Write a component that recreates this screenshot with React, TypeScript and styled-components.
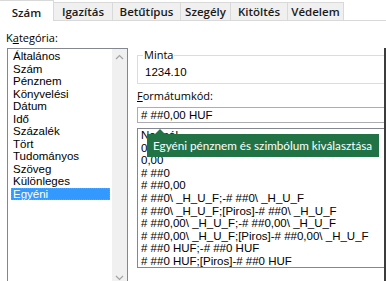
import styled, { createGlobalStyle } from "styled-components";

const GlobalStyle = createGlobalStyle`
  html, body {
    margin: 0;
    padding: 0;
    background: #ffffff;
    overflow: hidden;
  }
  body {
    width: 386px;
    height: 281px;
    font-family: "Noto Sans", "Open Sans", sans-serif;
    color: #000;
  }
`;

const Dialog = styled.div`
  width: 386px;
  height: 281px;
  display: flex;
  flex-direction: column;
  background: #fff;
  overflow: hidden;
`;

const TabStrip = styled.div`
  display: flex;
  align-items: flex-end;
  height: 21px;
  border-bottom: 1px solid #d9d9d9;
  box-sizing: border-box;
`;

const Tab = styled.div<{ $active?: boolean; $w: number }>`
  width: ${p => p.$w}px;
  height: ${p => (p.$active ? 21 : 18)}px;
  box-sizing: border-box;
  display: flex;
  align-items: center;
  justify-content: center;
  font-family: "Open Sans", sans-serif;
  font-size: 11.5px;
  font-weight: 600;
  color: #1a1a1a;
  background: ${p => (p.$active ? "#ffffff" : "#f0f0f0")};
  border: 1px solid #d9d9d9;
  border-left: ${p => (p.$active ? "none" : "1px solid #d9d9d9")};
  border-bottom: none;
  margin-bottom: ${p => (p.$active ? "-1px" : "0")};
  margin-left: ${p => (p.$active ? "0" : "-1px")};
  padding-top: ${p => (p.$active ? "3px" : "0")};
  position: relative;
  z-index: ${p => (p.$active ? 1 : 0)};
`;

const Body = styled.div`
  flex: 1;
  display: flex;
  min-height: 0;
`;

const LeftCol = styled.div`
  width: 128px;
  padding-left: 6px;
  box-sizing: border-box;
  display: flex;
  flex-direction: column;
`;

const Label = styled.div<{ $top: number }>`
  margin-top: ${p => p.$top}px;
  height: 14px;
  line-height: 14px;
  font-family: "Open Sans", sans-serif;
  font-size: 11px;
  color: #000;
  u {
    text-decoration: underline;
    text-underline-offset: 1px;
  }
`;

const CategoryBox = styled.div`
  margin-top: 3px;
  margin-left: 1px;
  width: 121px;
  flex: 1;
  border: 1px solid #828790;
  border-bottom: none;
  box-sizing: border-box;
  display: flex;
  min-height: 0;
`;

const CategoryList = styled.div`
  flex: 1;
  padding: 1px 0 0 3px;
`;

const CategoryItem = styled.div<{ $selected?: boolean }>`
  height: 12.5px;
  line-height: 12.5px;
  width: 99px;
  box-sizing: border-box;
  padding-left: 2px;
  font-family: "Liberation Sans", Arial, sans-serif;
  font-size: 11.5px;
  color: ${p => (p.$selected ? "#ffffff" : "#000")};
  background: ${p => (p.$selected ? "#3399ff" : "transparent")};
  outline: ${p => (p.$selected ? "1px dotted #d08a3a" : "none")};
  outline-offset: -1px;
  white-space: nowrap;
`;

const ScrollBar = styled.div`
  width: 15px;
  background: #f0f0f0;
  display: flex;
  flex-direction: column;
  justify-content: space-between;
  align-items: center;
  padding: 5px 0 0;
`;

const Arrow = styled.svg`
  display: block;
`;

const RightCol = styled.div`
  flex: 1;
  margin-left: 9px;
  margin-top: 27px;
  border-right: 2px solid #3c3c3c;
  display: flex;
  flex-direction: column;
  min-width: 0;
`;

const Sample = styled.fieldset`
  margin: 0;
  padding: 3px 0 0 7px;
  height: 36px;
  box-sizing: border-box;
  border: 1px solid #dcdcdc;
  border-right: none;
  font-family: "Liberation Sans", Arial, sans-serif;
  font-size: 11.5px;
  line-height: 14px;
  legend {
    padding: 0 1px;
    margin-left: -2px;
    font-family: "Open Sans", sans-serif;
    font-size: 11px;
    line-height: 14px;
  }
`;

const CodeInput = styled.div`
  margin-top: 4px;
  height: 16px;
  box-sizing: border-box;
  border: 1px solid #abadb3;
  border-right: none;
  padding-left: 3px;
  font-family: "Liberation Sans", Arial, sans-serif;
  font-size: 11.5px;
  line-height: 14px;
`;

const CodeList = styled.div`
  margin-top: 5px;
  height: 140px;
  box-sizing: border-box;
  border: 1px solid #828790;
  border-right: none;
  padding: 0 0 0 3px;
  position: relative;
`;

const CodeItem = styled.div`
  height: 12.6px;
  line-height: 12.6px;
  font-family: "Liberation Sans", Arial, sans-serif;
  font-size: 11.5px;
  white-space: nowrap;
`;

const Tooltip = styled.div`
  position: absolute;
  left: 9px;
  top: 5px;
  width: 232px;
  height: 23px;
  background: #217346;
  color: #ffffff;
  font-family: Lato, "Open Sans", sans-serif;
  font-size: 11.7px;
  line-height: 23px;
  padding-left: 6px;
  box-sizing: border-box;
  white-space: nowrap;
  &::before {
    content: "";
    position: absolute;
    left: 8px;
    top: -5px;
    border-left: 5px solid transparent;
    border-right: 5px solid transparent;
    border-bottom: 5px solid #217346;
  }
`;

const tabs: [string, number][] = [
  ["Szám", 54],
  ["Igazítás", 60],
  ["Betűtípus", 69],
  ["Szegély", 51],
  ["Kitöltés", 58],
  ["Védelem", 57],
];

const categories = [
  "Általános",
  "Szám",
  "Pénznem",
  "Könyvelési",
  "Dátum",
  "Idő",
  "Százalék",
  "Tört",
  "Tudományos",
  "Szöveg",
  "Különleges",
  "Egyéni",
];

const codes = [
  "Normál",
  "0",
  "0,00",
  "# ##0",
  "# ##0,00",
  "# ##0\\ _H_U_F;-# ##0\\ _H_U_F",
  "# ##0\\ _H_U_F;[Piros]-# ##0\\ _H_U_F",
  "# ##0,00\\ _H_U_F;-# ##0,00\\ _H_U_F",
  "# ##0,00\\ _H_U_F;[Piros]-# ##0,00\\ _H_U_F",
  "# ##0 HUF;-# ##0 HUF",
  "# ##0 HUF;[Piros]-# ##0 HUF",
];

export default function App() {
  return (
    <Dialog>
      <GlobalStyle />
      <TabStrip>
        {tabs.map(([t, w], i) => (
          <Tab key={t} $w={w} $active={i === 0}>
            {t}
          </Tab>
        ))}
      </TabStrip>
      <Body>
        <LeftCol>
          <Label $top={10}>
            K<u>a</u>tegória:
          </Label>
          <CategoryBox>
            <CategoryList>
              {categories.map(c => (
                <CategoryItem key={c} $selected={c === "Egyéni"}>
                  {c}
                </CategoryItem>
              ))}
            </CategoryList>
            <ScrollBar>
              <Arrow width="9" height="6" viewBox="0 0 9 6">
                <path d="M1 5 L4.5 1.5 L8 5" fill="none" stroke="#a3a3a3" strokeWidth="1.2" />
              </Arrow>
              <Arrow width="9" height="6" viewBox="0 0 9 6">
                <path d="M1 1 L4.5 4.5 L8 1" fill="none" stroke="#a3a3a3" strokeWidth="1.2" />
              </Arrow>
            </ScrollBar>
          </CategoryBox>
        </LeftCol>
        <RightCol>
          <Sample>
            <legend>Minta</legend>
            1234.10
          </Sample>
          <Label $top={5}>
            <u>F</u>ormátumkód:
          </Label>
          <CodeInput># ##0,00 HUF</CodeInput>
          <CodeList>
            {codes.map(c => (
              <CodeItem key={c}>{c}</CodeItem>
            ))}
            <Tooltip>Egyéni pénznem és szimbólum kiválasztása</Tooltip>
          </CodeList>
        </RightCol>
      </Body>
    </Dialog>
  );
}
